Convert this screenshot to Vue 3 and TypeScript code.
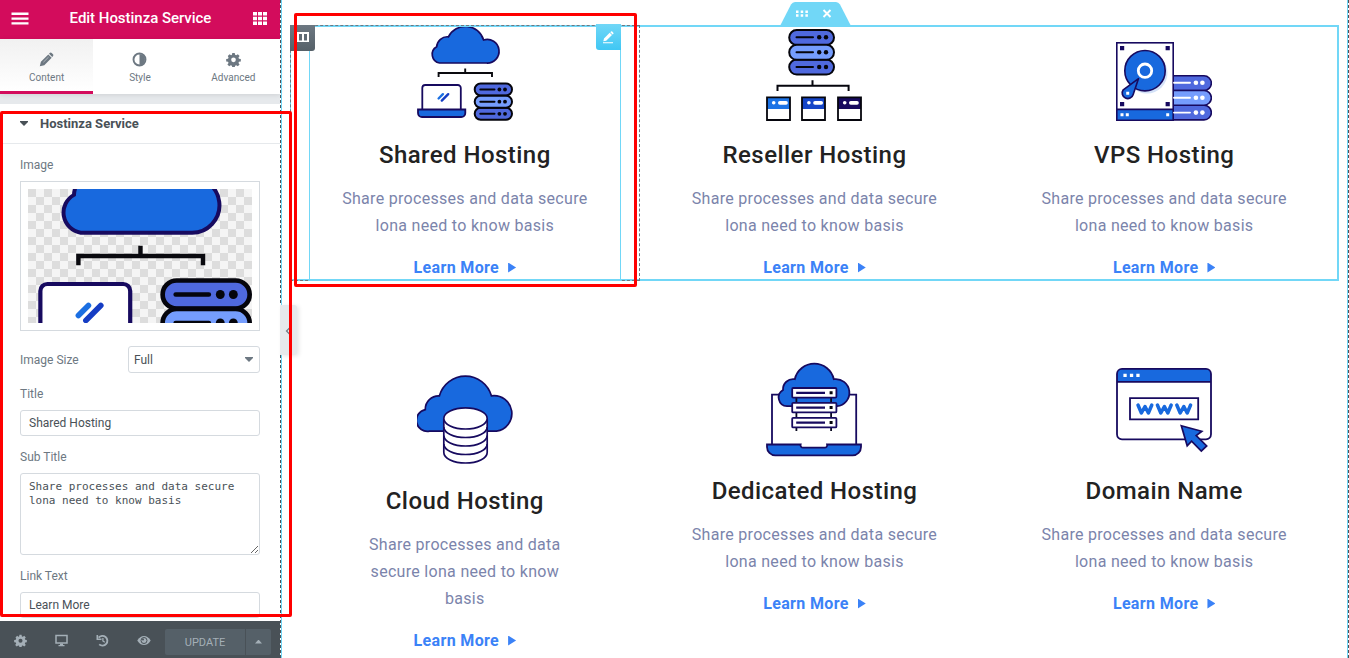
<script setup lang="ts">
import { ref } from 'vue'

interface Service {
  icon: string
  title: string
  lines: string[]
  low?: boolean
}

const twoLines = ['Share processes and data secure', 'lona need to know basis']

const rows: Service[][] = [
  [
    { icon: 'shared', title: 'Shared Hosting', lines: twoLines },
    { icon: 'reseller', title: 'Reseller Hosting', lines: twoLines },
    { icon: 'vps', title: 'VPS Hosting', lines: twoLines },
  ],
  [
    { icon: 'cloud', title: 'Cloud Hosting', lines: ['Share processes and data', 'secure lona need to know', 'basis'], low: true },
    { icon: 'dedicated', title: 'Dedicated Hosting', lines: twoLines },
    { icon: 'domain', title: 'Domain Name', lines: twoLines },
  ],
]

const title = ref('Shared Hosting')
const subTitle = ref('Share processes and data secure lona need to know basis')
const linkText = ref('Learn More')
</script>

<template>
  <div class="editor">
    <svg class="defs" width="0" height="0" aria-hidden="true">
      <defs>
        <symbol id="shared" viewBox="0 0 96 96">
          <path d="M22.6 38A8.7 8.700 0 0 1 19.700 21.800A10.600 10.600 0 0 1 31.400 11.800A19 19 0 0 1 66.600 15A11.800 11.800 0 1 1 69.500 38Z" fill="#1869de" stroke="#170a5f" stroke-width="1.700" />
          <path d="M21.600 52V48H75V52M48.200 48V43.600" fill="none" stroke="#0a0a0f" stroke-width="1.900" />
          <path d="M5.300 84V63a3 3 0 0 1 3-3h32.500a3 3 0 0 1 3 3v21" fill="#fff" stroke="#170a5f" stroke-width="1.800" />
          <path d="M1 84.500H48.300V88a4 4 0 0 1-4 4H5a4 4 0 0 1-4-4Z" fill="#1869de" stroke="#170a5f" stroke-width="1.800" />
          <path d="M21.600 73.500L25.900 69.200" stroke="#1b6fe2" stroke-width="2.400" stroke-linecap="round" />
          <path d="M24.800 75.600L31.200 69.200" stroke="#153dc4" stroke-width="2.400" stroke-linecap="round" />
          <g stroke="#05050c" stroke-width="2">
            <rect x="57.700" y="58.500" width="37.300" height="12" rx="6" fill="#4f69de" />
            <rect x="57.700" y="82.800" width="37.300" height="12" rx="6" fill="#4f69de" />
            <rect x="57.700" y="70.700" width="37.300" height="12" rx="6" fill="#759dfd" />
            <path d="M63.300 64.500H77.500M63.300 76.700H77.500M63.300 88.800H77.500" stroke-linecap="round" />
          </g>
          <g fill="#05050c"><circle cx="82.400" cy="64.500" r="1.900" /><circle cx="88" cy="64.500" r="1.900" /><circle cx="82.400" cy="76.700" r="1.900" /><circle cx="88" cy="76.700" r="1.900" /><circle cx="82.400" cy="88.800" r="1.900" /><circle cx="88" cy="88.800" r="1.900" /></g>
        </symbol>
        <symbol id="reseller" viewBox="0 0 96 96">
          <g stroke="#05050c" stroke-width="2">
            <rect x="23.200" y="5" width="44.800" height="15" rx="7.500" fill="#4f69de" />
            <rect x="23.200" y="34.600" width="44.800" height="15" rx="7.500" fill="#4f69de" />
            <rect x="23.200" y="19.800" width="44.800" height="15" rx="7.500" fill="#759dfd" />
            <path d="M30.500 12.300H47M30.500 27.200H47M30.500 42H47" stroke-linecap="round" />
            <path d="M11.500 66V60.800H82.600V66M46.500 60.800V55.300" fill="none" />
          </g>
          <g fill="#05050c"><circle cx="53.200" cy="12.300" r="2.200" /><circle cx="60" cy="12.300" r="2.200" /><circle cx="53.200" cy="27.200" r="2.200" /><circle cx="60" cy="27.200" r="2.200" /><circle cx="53.200" cy="42" r="2.200" /><circle cx="60" cy="42" r="2.200" /></g>
          <path d="M1 72H24V84H1Z" fill="#1b73e6" /><path d="M36 72H59V84H36Z" fill="#1545c8" /><path d="M72 72H95V84H72Z" fill="#170a5f" />
          <path d="M1 72.300H24V95H1ZM36 72.300H59V95H36ZM72 72.300H95V95H72Z" fill="none" stroke="#05050c" stroke-width="1.800" />
          <g fill="#fff"><circle cx="7.700" cy="77.800" r="1.800" /><circle cx="42.900" cy="77.800" r="1.800" /><circle cx="78.700" cy="77.800" r="1.800" /><rect x="12" y="76" width="9.800" height="3.700" rx="1.800" /><rect x="47.200" y="76" width="9.800" height="3.700" rx="1.800" /><rect x="83" y="76" width="9.800" height="3.700" rx="1.800" /></g>
        </symbol>
        <symbol id="vps" viewBox="0 0 96 96">
          <g stroke="#170a5f" stroke-width="1.600">
            <path d="M52 50.800H88a7.300 7.300 0 0 1 0 14.700H52Z" fill="#4f69de" />
            <path d="M52 80.200H88a7.300 7.300 0 0 1 0 14.700H52Z" fill="#4f69de" />
            <path d="M52 65.500H88a7.300 7.300 0 0 1 0 14.700H52Z" fill="#759dfd" />
            <rect x=".8" y="17.800" width="56.400" height="77.400" fill="#fff" />
            <path d="M.8 84.400H57.200V95.200H.8Z" fill="#1869de" />
          </g>
          <circle cx="31" cy="48" r="20.500" fill="#d4e2f8" />
          <circle cx="29" cy="45.700" r="20.200" fill="#1869de" stroke="#170a5f" stroke-width="1.600" />
          <circle cx="29" cy="45.700" r="6.700" fill="none" stroke="#fff" stroke-width="2.800" />
          <path d="M22.500 53.600L17.200 69.500A5.600 5.600 0 1 1 7.200 64.800Z" fill="#1869de" stroke="#170a5f" stroke-width="1.600" stroke-linejoin="round" />
          <path d="M4 21h4.200v4.200H4ZM49.600 21h4.200v4.200h-4.200ZM4 77h4.200v4.200H4ZM49.600 77h4.200v4.200h-4.200Z" fill="#170a5f" />
          <path d="M4.500 88.200h3v3h-3ZM9.800 88.200h3v3h-3ZM50.200 88.200h3v3h-3ZM10.200 66.800h3v3h-3Z" fill="#fff" />
          <path d="M58 57.800H74M58 72.700H74M58 87.600H74" stroke="#fff" stroke-width="1.900" stroke-linecap="round" />
          <g fill="#fff"><circle cx="79.900" cy="57.800" r="2.300" /><circle cx="86.400" cy="57.800" r="2.300" /><circle cx="79.900" cy="72.700" r="2.300" /><circle cx="86.400" cy="72.700" r="2.300" /><circle cx="79.900" cy="87.600" r="2.300" /><circle cx="86.400" cy="87.600" r="2.300" /></g>
        </symbol>
        <symbol id="cloud" viewBox="0 0 96 96">
          <g stroke="#170a5f" stroke-width="1.700">
            <path d="M12.500 60.200A10.900 10.900 0 0 1 8.300 38.600A13.400 13.400 0 0 1 22.400 24.800A27 27 0 0 1 74.400 24.800A17.800 17.800 0 1 1 79.500 60.200Z" fill="#1869de" />
            <path d="M26.800 47.400V81.400a21.700 10.600 0 0 0 43.400 0V47.400" fill="#fff" />
            <ellipse cx="48.500" cy="47.400" rx="21.700" ry="10.600" fill="#fff" />
            <path d="M26.800 55.900a21.700 10.600 0 0 0 43.400 0M26.800 64.400a21.700 10.600 0 0 0 43.400 0M26.800 72.900a21.700 10.600 0 0 0 43.400 0" fill="none" />
          </g>
        </symbol>
        <symbol id="dedicated" viewBox="0 0 96 96">
          <g stroke="#170a5f" stroke-width="1.800">
            <path d="M6 83V33.700H90.200V83" fill="#fff" />
            <path d="M21 45.200A8.700 8.700 0 0 1 17 29A10.200 10.200 0 0 1 28.800 18.200A20 20 0 0 1 67.800 18.200A13.600 13.600 0 1 1 71 45.200Z" fill="#1869de" />
            <path d="M1 83.500H34.600a2.500 2.500 0 0 0 2.500 3.200H58.600a2.500 2.500 0 0 0 2.500-3.200H95V86a8.300 8.300 0 0 1-8.300 8.300H9.300A8.300 8.300 0 0 1 1 86Z" fill="#1869de" />
            <path d="M30.400 36V70M65.100 36V70" stroke="#0a0a20" />
            <rect x="26.200" y="27" width="44.200" height="9.600" rx="1" fill="#fff" />
            <rect x="26.200" y="41.800" width="44.200" height="9.600" rx="1" fill="#fff" />
            <rect x="26.200" y="56.800" width="44.200" height="9.600" rx="1" fill="#fff" />
            <path d="M30.200 31.800H59M30.200 46.600H59M30.200 61.600H59" stroke-width="2.300" />
          </g>
          <path d="M63.600 30.300h3v3h-3ZM63.600 45.100h3v3h-3ZM63.600 60.100h3v3h-3Z" fill="#05050c" />
        </symbol>
        <symbol id="domain" viewBox="0 0 96 96">
          <rect x="1" y="7.900" width="94" height="70.400" rx="5" fill="#fff" />
          <path d="M1 20.800V12.900a5 5 0 0 1 5-5H90a5 5 0 0 1 5 5V20.800Z" fill="#1869de" />
          <g fill="none" stroke="#170a5f" stroke-width="1.800"><rect x="1" y="7.900" width="94" height="70.400" rx="5" /><path d="M1 20.800H95M14 37.200H82.200V58.400H14Z" /></g>
          <path d="M7.400 12.800h3.300v3.300H7.400ZM13.900 12.800h3.300v3.300h-3.300ZM20.300 12.800h3.300v3.300h-3.300Z" fill="#fff" />
          <path d="M22 44L25.400 52L29 45.500L32.400 52L35.800 44M41.400 44L44.800 52L48.400 45.500L51.800 52L55.200 44M60.800 44L64.200 52L67.800 45.500L71.200 52L74.600 44" fill="none" stroke="#1869de" stroke-width="3.500" stroke-linecap="round" stroke-linejoin="round" />
          <path d="M65.300 64.700L85.800 70.300L80.200 74.500L90.700 84.900L85.300 90.100L75.600 80.200L71.200 84.800Z" fill="#1869de" stroke="#170a5f" stroke-width="1.700" />
        </symbol>
        <symbol id="gear" viewBox="0 0 16 16">
          <path fill-rule="evenodd" d="M6.700 1h2.600l.4 2 1.200.5 1.700-1.200 1.900 1.900-1.200 1.700.5 1.200 2 .4v2.600l-2 .4-.5 1.200 1.200 1.700-1.900 1.900-1.700-1.200-1.200.5-.4 2H6.700l-.4-2-1.200-.5-1.700 1.200-1.900-1.900 1.200-1.700-.5-1.200-2-.4V7.500l2-.4.5-1.200L1.900 4.200l1.900-1.900 1.700 1.200L6.300 3ZM8 5.800A2.500 2.500 0 1 0 8 10.800A2.500 2.500 0 1 0 8 5.800Z" />
        </symbol>
      </defs>
    </svg>

    <aside class="panel">
      <header class="panel-head">
        <svg width="18" height="13" viewBox="0 0 18 13" fill="#fff"><path d="M.5.6h17v2.400H.5ZM.5 5.400h17v2.400H.5ZM.5 10.200h17v2.400H.5Z" /></svg>
        <h1>Edit Hostinza Service</h1>
        <svg width="14" height="13" viewBox="0 0 14 13" fill="#fff"><path d="M0 0h4v3.500H0ZM5 0h4v3.500H5ZM10 0h4v3.500h-4ZM0 4.700h4v3.500H0ZM5 4.700h4v3.500H5ZM10 4.700h4v3.500h-4ZM0 9.400h4v3.500H0ZM5 9.400h4v3.500H5ZM10 9.400h4v3.500h-4Z" /></svg>
      </header>
      <nav class="tabs">
        <a class="tab active">
          <svg width="15" height="15" viewBox="0 0 15 15" fill="#6d7882"><path d="M10 1.700l1-.9a1.300 1.300 0 0 1 1.700.1l1.300 1.300a1.300 1.300 0 0 1 .1 1.700l-.9 1ZM9.300 2.400l3.400 3.400-7.400 7.400L.8 14.300 1.900 9.800Z" /><path d="M4.400 10.200L9.600 5" stroke="#dcdfe2" stroke-width=".6" /></svg>
          <span>Content</span>
        </a>
        <a class="tab">
          <svg width="15" height="15" viewBox="0 0 15 15"><circle cx="7.500" cy="7.500" r="6" fill="#fff" stroke="#6d7882" stroke-width="1.900" /><path d="M7.500 2a5.500 5.500 0 0 1 0 11Z" fill="#6d7882" /></svg>
          <span>Style</span>
        </a>
        <a class="tab">
          <svg width="15" height="15" fill="#6d7882"><use href="#gear" /></svg>
          <span>Advanced</span>
        </a>
      </nav>
      <div class="controls">
        <h2 class="section-head"><i class="caret"></i>Hostinza Service</h2>
        <div class="fields">
          <label>Image</label>
          <div class="media">
            <div class="checker">
              <svg width="224" height="134" viewBox="0 0 96 96" preserveAspectRatio="xMidYMid slice"><use href="#shared" width="96" height="96" /></svg>
            </div>
          </div>
          <div class="size-row">
            <label>Image Size</label>
            <div class="select">Full<i class="caret"></i></div>
          </div>
          <label>Title</label>
          <input v-model="title" type="text" />
          <label>Sub Title</label>
          <textarea v-model="subTitle"></textarea>
          <label>Link Text</label>
          <input v-model="linkText" type="text" />
        </div>
      </div>
      <footer class="panel-foot">
        <svg class="tool" width="13" height="13" fill="#a4afb7"><use href="#gear" /></svg>
        <svg class="tool" width="13" height="13" viewBox="0 0 13 13"><path d="M1 1.500H12V9H1Z" fill="none" stroke="#a4afb7" stroke-width="1.500" /><path d="M5 9.500H8V11h1.500v1.200h-6V11H5Z" fill="#a4afb7" /></svg>
        <svg class="tool" width="13" height="13" viewBox="0 0 13 13" fill="none" stroke="#a4afb7"><path d="M2.600 3.700A4.900 4.900 0 1 1 3.200 10.400" stroke-width="1.900" /><path d="M1.300 1V5.200H5.500" stroke-width="1.600" /><path d="M6.900 3.900V7L8.800 8.300" stroke-width="1.300" /></svg>
        <svg class="tool" width="14" height="13" viewBox="0 0 14 13"><path d="M.3 6.500Q3 2 7 2T13.700 6.500Q11 11 7 11T.3 6.500Z" fill="#a4afb7" /><circle cx="7" cy="6.500" r="3" fill="none" stroke="#495157" stroke-width="1" /><circle cx="6" cy="5.500" r="1" fill="#495157" /></svg>
        <div class="update"><span class="update-main">UPDATE</span><span class="update-more"><i class="up"></i></span></div>
      </footer>
    </aside>

    <main class="preview">
      <section v-for="(row, r) in rows" :key="r" class="row">
        <article v-for="s in row" :key="s.title" class="service" :class="{ low: s.low }">
          <svg width="96" height="96"><use :href="'#' + s.icon" /></svg>
          <h3>{{ s.title }}</h3>
          <p><span v-for="line in s.lines" :key="line">{{ line }}</span></p>
          <a class="more">Learn More<i></i></a>
        </article>
        <template v-if="r === 0">
          <div class="section-outline"></div>
          <div class="column-outline"></div>
          <div class="widget-outline"></div>
          <div class="column-handle"><svg width="12" height="10" viewBox="0 0 12 10"><path d="M0 0H12V10H0Z" fill="#fff" /><path d="M2 2H5V8.500H2ZM7 2H10V8.500H7Z" fill="#606b74" /></svg></div>
          <div class="widget-handle"><svg width="13" height="13" viewBox="0 0 13 13" fill="#fff"><path d="M1.300 10.300L2 7.500 7.700 1.800 10 4.100 4.200 9.800ZM8.300 1.200l.7-.6a.9.9 0 0 1 1.200 0l1.100 1.100a.9.9 0 0 1 0 1.200l-.7.7ZM1 11.300H11v1H1Z" /></svg></div>
          <svg class="section-handle" width="71" height="24" viewBox="0 0 71 24"><path d="M0 24L11 2.500Q12.500 0 15 0H56Q58.500 0 60 2.500L71 24Z" fill="#71d7f7" /><path d="M16 8.500h2.500V11H16ZM20.700 8.500h2.500V11h-2.500ZM25.400 8.500h2.500V11h-2.500ZM16 12.200h2.500v2.500H16ZM20.700 12.200h2.500v2.500h-2.500ZM25.400 12.200h2.500v2.500h-2.500Z" fill="#fff" /><path d="M43.500 8L50.500 15M50.500 8L43.500 15" stroke="#fff" stroke-width="1.900" /></svg>
        </template>
      </section>
    </main>

    <div class="collapse"><svg width="6" height="8" viewBox="0 0 6 8"><path d="M4.800.7L1.500 4L4.800 7.300" fill="none" stroke="#6d7882" stroke-width="1.200" /></svg></div>
    <div class="mark mark-panel"></div>
    <div class="mark mark-widget"></div>
  </div>
</template>

<style>
body { margin: 0; overflow: hidden; }
</style>

<style scoped>
* { box-sizing: border-box; }
.editor { position: relative; display: flex; width: 1349px; height: 658px; overflow: hidden; background: #fff; font-family: Roboto, sans-serif; }
.defs { position: absolute; }
svg { display: block; flex: none; }

.panel { display: flex; flex-direction: column; width: 280px; height: 658px; background: #fff; flex: none; }
.panel-head { display: flex; align-items: center; justify-content: space-between; height: 39px; padding: 0 13px 2px 11px; background: #d30c5c; flex: none; }
.panel-head h1 { margin: 0 1px 2px 0; color: #fff; font-size: 15px; font-weight: 500; letter-spacing: -.03px; }
.tabs { display: flex; height: 55px; flex: none; position: relative; box-shadow: 0 1px 5px rgba(0, 0, 0, .1); }
.tab { display: flex; flex: 1; flex-direction: column; align-items: center; padding-top: 13px; border-bottom: 3px solid transparent; color: #6d7882; font-size: 10px; line-height: 12px; }
.tab span { margin-top: 5px; }
.tab.active { border-bottom-color: #d30c5c; background: linear-gradient(#f1f1f1, #fff); background-clip: padding-box; }
.controls { display: flex; flex: 1; flex-direction: column; min-height: 0; overflow: hidden; border-top: 10px solid #e6e9ec; }
.section-head { display: flex; align-items: center; height: 40px; margin: 0; padding-left: 20px; border-bottom: 1px solid #e6e9ec; color: #495157; font-size: 13px; font-weight: 700; flex: none; }
.section-head .caret { margin-right: 12px; }
.caret { display: block; width: 8px; height: 5px; background: #495157; clip-path: polygon(0 0, 100% 0, 100% 20%, 50% 100%, 0 20%); }
.fields { display: flex; flex-direction: column; padding: 14px 20px 0; color: #495157; font-size: 12px; }
label { height: 14px; color: #6d7882; font-size: 12px; line-height: 14px; flex: none; }
.media { height: 150px; margin: 9px 0 15px; padding: 7px; border: 1px solid #d5dadf; flex: none; }
.checker { height: 134px; background: repeating-conic-gradient(#f5f5f5 0 25%, #ddd 0 50%) 0 0 / 16px 16px; }
.size-row { display: flex; align-items: center; justify-content: space-between; margin-bottom: 14px; flex: none; }
.select { display: flex; align-items: center; justify-content: space-between; width: 132px; height: 27px; padding: 0 6px 0 5px; border: 1px solid #d5dadf; border-radius: 3px; }
.select .caret { background: #6d7882; }
input, textarea { display: block; width: 240px; margin: 9px 0 14px; border: 1px solid #d5dadf; border-radius: 3px; outline: none; background: #fff; color: #495157; flex: none; }
input { height: 26px; padding: 0 8px; font: 12px Roboto, sans-serif; }
textarea { height: 82px; padding: 6px 8px; font: 11px/14px "DejaVu Sans Mono", monospace; resize: vertical; }
.panel-foot { display: flex; align-items: center; height: 37px; padding: 2px 0 0 14px; background: #495157; flex: none; }
.tool { margin-right: 28px; }
.tool:nth-of-type(4) { margin-right: 14px; }
.update { display: flex; height: 26px; margin-top: 2px; border-radius: 2px; overflow: hidden; background: #556068; color: #a4afb7; font-size: 11px; line-height: 27px; text-align: center; }
.update-main { width: 81px; border-right: 1px solid #495157; }
.update-more { display: flex; align-items: center; justify-content: center; width: 25px; }
.up { width: 7px; height: 4px; background: #a4afb7; clip-path: polygon(50% 0, 100% 100%, 0 100%); }

.preview {
  position: relative;
  flex: 1;
  padding: 25px 10px 0;
  background: linear-gradient(#71d7f7, #71d7f7) 1px 0 / 1px 100% no-repeat, linear-gradient(#71d7f7, #71d7f7) calc(100% - 1px) 0 / 1px 100% no-repeat;
}
.preview::before { content: ""; position: absolute; left: 0; top: 0; height: 658px; border-left: 1px dashed #495157; }
.preview::after { content: ""; position: absolute; right: 0; top: 0; height: 658px; border-left: 1px dashed #495157; background: #fff; }
.row { position: relative; display: grid; grid-template-columns: repeat(3, 1fr); height: 336px; }
.service { display: flex; flex-direction: column; align-items: center; }
.service.low { padding-top: 10px; }
.service h3 { margin: 16px 0 0; color: #222; font-size: 24px; font-weight: 500; line-height: 36px; letter-spacing: .45px; white-space: nowrap; }
.service p { margin: 12px 0 0; color: #7b84ab; font-size: 16px; line-height: 27px; letter-spacing: .3px; text-align: center; white-space: nowrap; }
.service p span { display: block; }
.more { display: flex; align-items: center; margin-top: 15px; color: #3b82f7; font-size: 16px; font-weight: 700; line-height: 27px; letter-spacing: .35px; }
.more i { width: 8px; height: 10px; margin-left: 9px; background: #3b82f7; clip-path: polygon(0 0, 100% 50%, 0 100%); }
.section-outline { position: absolute; inset: 0 0 auto 0; height: 256px; border: 2px solid #71d7f7; border-left-width: 0; box-shadow: inset 2px 0 0 -1px #71d7f7; }
.column-outline { position: absolute; left: 0; top: 0; width: 350px; height: 256px; border: 1px dashed #6d7882; }
.widget-outline { position: absolute; left: 19px; top: 0; width: 312px; height: 256px; border: 1px solid #71d7f7; border-top-color: transparent; }
.column-handle { position: absolute; left: 0; top: 0; display: grid; place-items: center; width: 25px; height: 26px; padding-bottom: 2px; border-radius: 0 0 3px 0; background: linear-gradient(#6d7882, #556068); }
.widget-handle { position: absolute; left: 306px; top: -1px; display: grid; place-items: center; width: 25px; height: 26px; border-radius: 0 0 0 3px; background: linear-gradient(#71d7f7, #40c7f4); }
.section-handle { position: absolute; left: 490px; top: -23px; }

.collapse { position: absolute; left: 280px; top: 305px; display: flex; align-items: center; justify-content: center; width: 17px; height: 50px; padding-top: 2px; border-radius: 0 3px 3px 0; background: #e6e9ec; box-shadow: 2px 1px 4px rgba(0, 0, 0, .1); }
.collapse svg { margin-right: 2px; }
.mark { position: absolute; border: 3px solid #f00; border-radius: 2px; }
.mark-panel { left: 0; top: 111px; width: 292px; height: 506px; }
.mark-widget { left: 294px; top: 13px; width: 343px; height: 274px; }
</style>
